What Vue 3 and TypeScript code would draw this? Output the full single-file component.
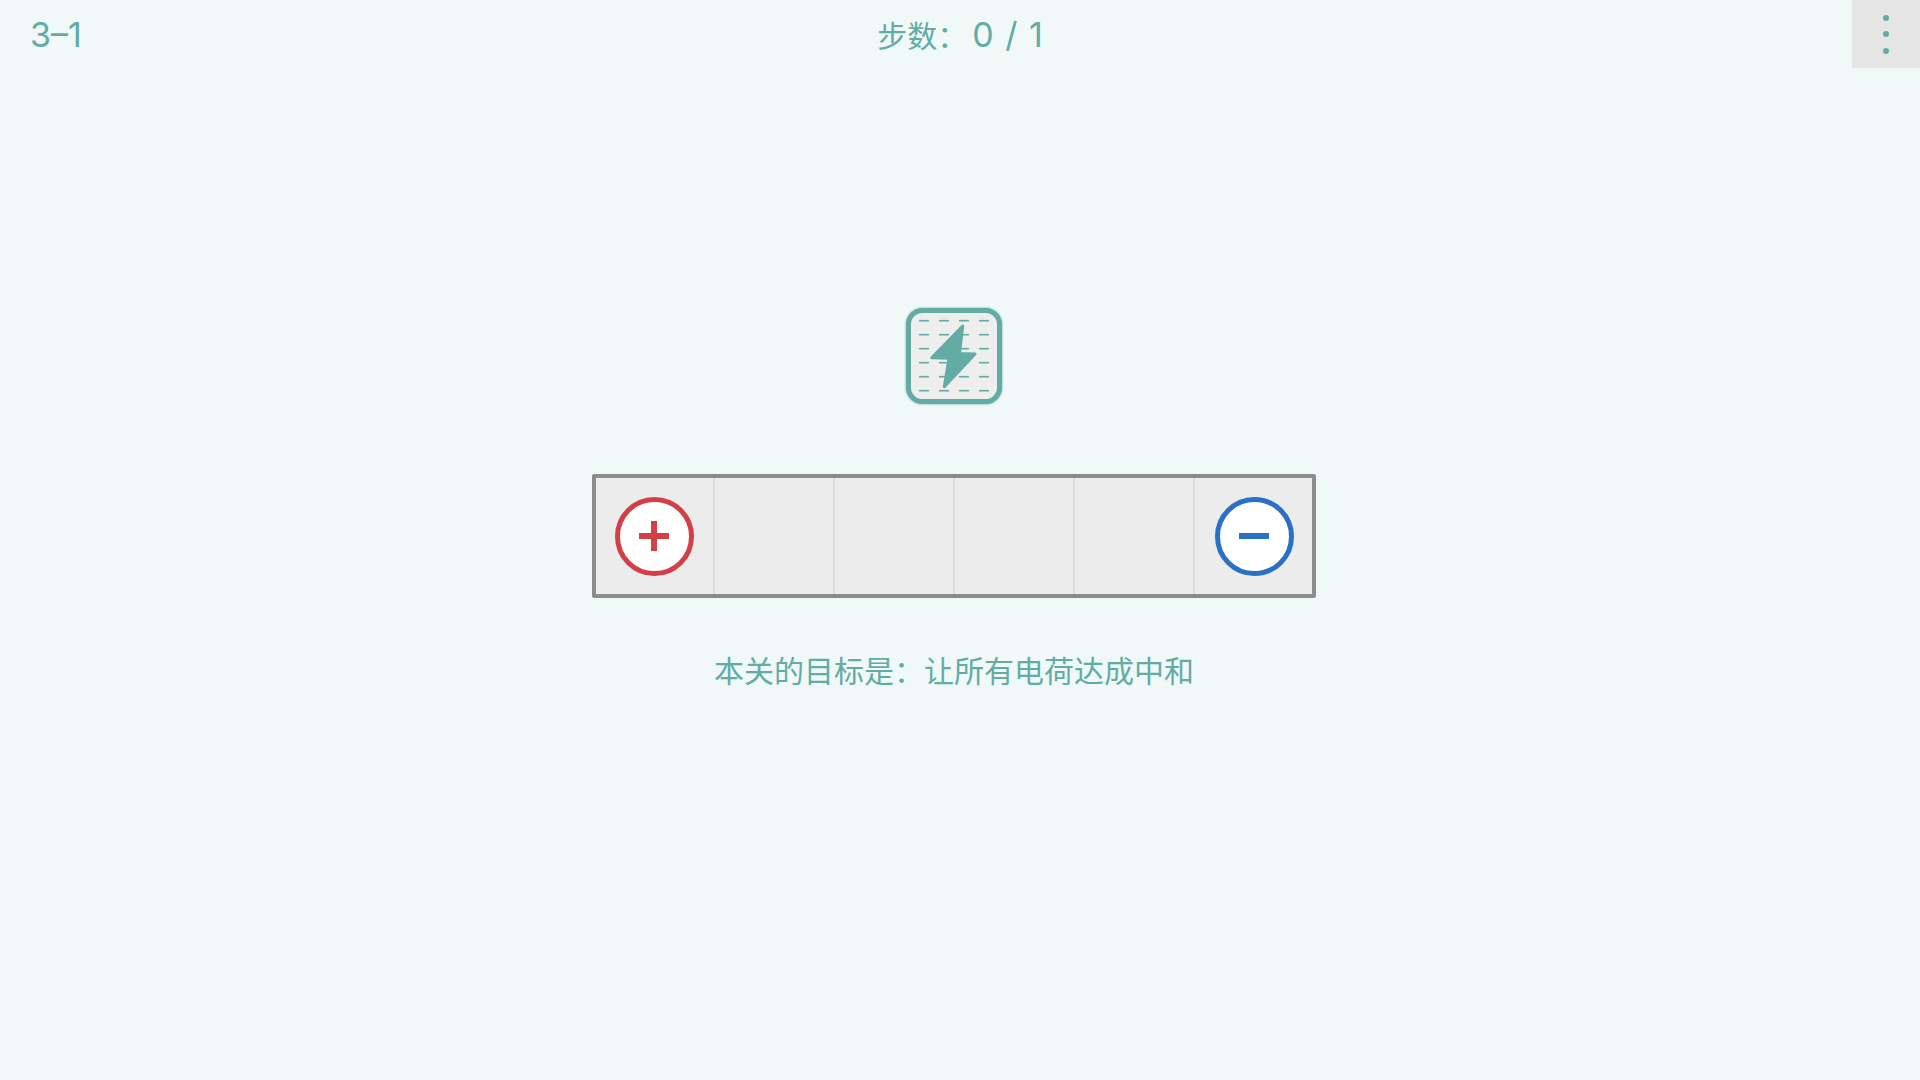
<script setup lang="ts">
const cells = [
  { id: 0, charge: 'plus' },
  { id: 1, charge: '' },
  { id: 2, charge: '' },
  { id: 3, charge: '' },
  { id: 4, charge: '' },
  { id: 5, charge: 'minus' },
]

const dashRows = [12.7, 26.7, 40.7, 54.7, 68.7, 82.7]
const dashCols = [13, 33, 53, 73]
</script>

<template>
  <div class="page">
    <header class="top-bar">
      <div class="level">3–1</div>
      <div class="steps">步数：<span class="count">0 / 1</span></div>
      <div class="menu-wrap">
        <button class="menu" type="button" aria-label="菜单">
          <span class="dot" />
          <span class="dot" />
          <span class="dot" />
        </button>
      </div>
    </header>

    <main class="stage">
      <svg class="goal-icon" width="96" height="96" viewBox="0 0 96 96">
        <rect x="2.5" y="2.5" width="91" height="91" rx="14" fill="#eeeeee" stroke="#62aca4" stroke-width="5" />
        <g stroke="#62aca4" stroke-width="1.6">
          <template v-for="y in dashRows" :key="y">
            <line v-for="x in dashCols" :key="x" :x1="x" :x2="x + 10" :y1="y" :y2="y" />
          </template>
        </g>
        <path
          d="M56.7 18 L53.5 45.5 L69 46 L38.3 78.7 L43 50.3 L25.7 49.7 Z"
          fill="#62aca4"
          stroke="#62aca4"
          stroke-width="3"
          stroke-linejoin="round"
        />
      </svg>

      <div class="board">
        <div class="cells">
          <div v-for="cell in cells" :key="cell.id" class="cell">
            <div v-if="cell.charge" class="charge" :class="cell.charge">
              <span class="bar" />
              <span v-if="cell.charge === 'plus'" class="bar vertical" />
            </div>
          </div>
        </div>
      </div>

      <p class="goal">本关的目标是：让所有电荷达成中和</p>
    </main>
  </div>
</template>

<style scoped>
.page {
  min-height: 1080px;
  background: #f0f9f8;
  color: #62aca4;
  font-family: Inter, "Noto Sans CJK SC", sans-serif;
  font-size: 30px;
}

.top-bar {
  display: grid;
  grid-template-columns: 1fr auto 1fr;
  align-items: start;
  height: 68px;
}

.level {
  padding: 2px 0 0 30px;
  font-size: 34px;
  line-height: 66px;
}

.steps {
  padding-top: 2px;
  line-height: 66px;
}

.count {
  margin-left: 5px;
  font-size: 34px;
  word-spacing: 2px;
}

.menu-wrap {
  display: flex;
  justify-content: flex-end;
}

.menu {
  display: flex;
  flex-direction: column;
  align-items: center;
  justify-content: center;
  gap: 10.5px;
  width: 68px;
  height: 68px;
  padding: 0;
  border: 0;
  background: #e6e6e6;
}

.dot {
  width: 6px;
  height: 6px;
  border-radius: 50%;
  background: #62aca4;
}

.stage {
  display: flex;
  flex-direction: column;
  align-items: center;
  padding-top: 240px;
  padding-right: 12px;
}

.goal-icon {
  display: block;
  filter: drop-shadow(0 0 1px #62aca4);
}

.board {
  box-sizing: border-box;
  width: 724px;
  height: 124px;
  margin-top: 70px;
  border: 4px solid #8c8c8c;
  border-radius: 2px;
  background: #ececec;
}

/* the grid lines sit on the middle of the frame stroke, so cells start 2px under it */
.cells {
  display: flex;
  height: 120px;
  margin: -2px;
}

.cell {
  position: relative;
  display: flex;
  flex: 0 0 120px;
  align-items: center;
  justify-content: center;
}

.cell:not(:last-child)::after {
  content: "";
  position: absolute;
  top: 2px;
  right: -1px;
  bottom: 2px;
  width: 2px;
  background: #dcdcdc;
}

.charge {
  position: relative;
  box-sizing: border-box;
  width: 79px;
  height: 79px;
  border: 5px solid;
  border-radius: 50%;
  background: #fff;
}

.charge.plus {
  color: #d33f46;
}

.charge.minus {
  color: #2a70c4;
}

.bar {
  position: absolute;
  top: 50%;
  left: 50%;
  width: 30px;
  height: 6px;
  background: currentColor;
  transform: translate(-50%, -50%);
}

.bar.vertical {
  width: 6px;
  height: 30px;
}

.goal {
  margin: 54px 0 0;
  line-height: 38px;
}
</style>

<style>
html,
body {
  background: #f0f9f8;
}
</style>
